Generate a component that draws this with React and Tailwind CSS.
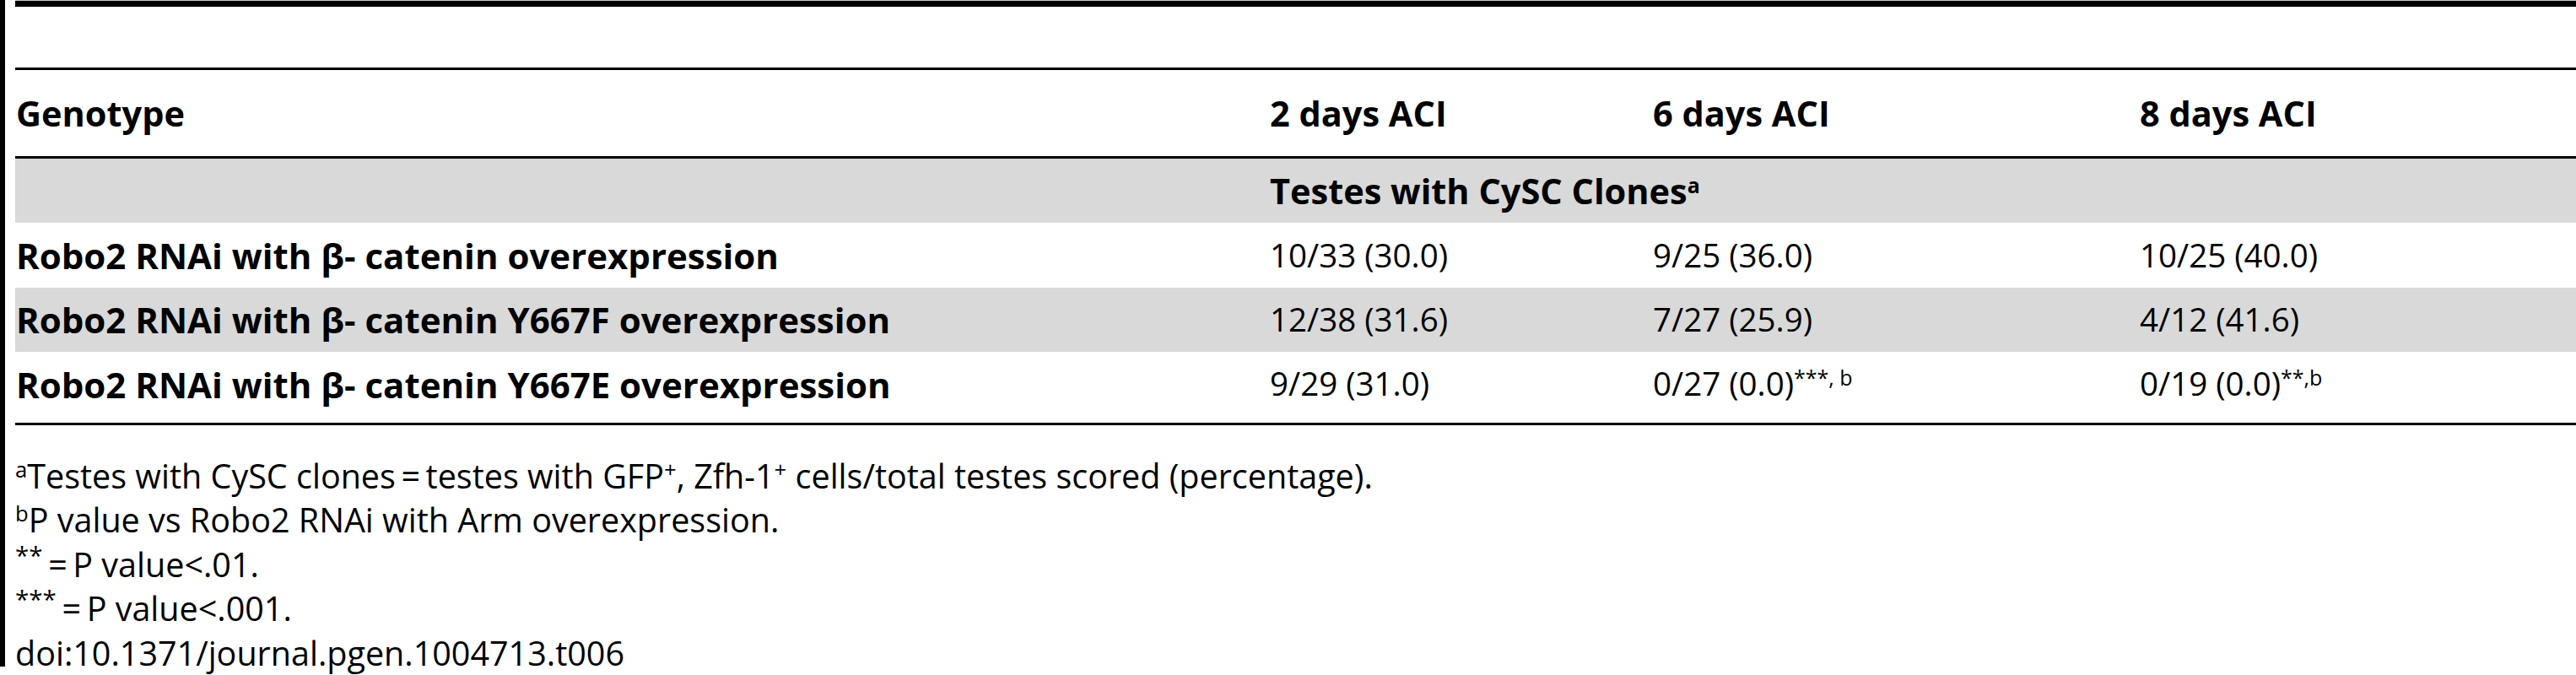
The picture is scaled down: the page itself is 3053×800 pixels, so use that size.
import React from "react";

const rows = [
  {
    genotype: "Robo2 RNAi with β- catenin overexpression",
    cells: ["10/33 (30.0)", "9/25 (36.0)", "10/25 (40.0)"],
    shade: false,
  },
  {
    genotype: "Robo2 RNAi with β- catenin Y667F overexpression",
    cells: ["12/38 (31.6)", "7/27 (25.9)", "4/12 (41.6)"],
    shade: true,
  },
  {
    genotype: "Robo2 RNAi with β- catenin Y667E overexpression",
    cells: [
      "9/29 (31.0)",
      <>0/27 (0.0)<sup className="text-[0.65em]">***, b</sup></>,
      <>0/19 (0.0)<sup className="text-[0.65em]">**,b</sup></>,
    ],
    shade: false,
  },
];

const grid = "grid grid-cols-[1487px_454px_577px_1fr] items-center";

export default function App() {
  return (
    <div
      className="flex bg-white text-black w-[3053px] h-[800px] overflow-hidden"
      style={{ fontFamily: '"Open Sans", "Noto Sans", sans-serif' }}
    >
      {/* left rule */}
      <div className="w-[6px] h-[790px] bg-black shrink-0" />

      <div className="flex-1 ml-[12px] flex flex-col text-[38.5px]">
        <div className="h-px bg-[#c8c8c8]" />
        <div className="h-[7px] bg-black" />
        <div className="h-[73px]" />
        <div className="h-[3px] bg-black" />

        {/* header */}
        <div className={`${grid} h-[102px] font-bold text-[41.5px]`}>
          <div className="pl-px">Genotype</div>
          <div>2 days ACI</div>
          <div>6 days ACI</div>
          <div>8 days ACI</div>
        </div>
        <div className="h-[3px] bg-black" />

        <div className={`${grid} h-[77px] bg-[#d9d9d9] font-bold text-[41.5px]`}>
          <div />
          <div className="col-span-3">
            Testes with CySC Clones<sup className="text-[0.6em]">a</sup>
          </div>
        </div>

        {rows.map((r, i) => (
          <div key={i} className={`${grid} h-[77px] ${r.shade ? "bg-[#d9d9d9]" : ""}`}>
            <div className="pl-px font-bold text-[42px]">{r.genotype}</div>
            {r.cells.map((c, j) => (
              <div key={j}>{c}</div>
            ))}
          </div>
        ))}

        <div className="h-[7px]" />
        <div className="h-[3px] bg-black" />

        {/* footnotes */}
        <div className="mt-[34px] leading-[52.5px] text-[39.5px]">
          <div>
            <sup className="text-[0.65em]">a</sup>Testes with CySC clones{"\u2009=\u2009"}testes with GFP
            <sup className="text-[0.65em]">+</sup>, Zfh-1<sup className="text-[0.65em]">+</sup> cells/total testes
            scored (percentage).
          </div>
          <div>
            <sup className="text-[0.65em]">b</sup>P value vs Robo2 RNAi with Arm overexpression.
          </div>
          <div>
            <sup className="text-[0.75em]">**</sup>{"\u2009=\u2009"}P value&lt;.01.
          </div>
          <div>
            <sup className="text-[0.75em]">***</sup>{"\u2009=\u2009"}P value&lt;.001.
          </div>
          <div>doi:10.1371/journal.pgen.1004713.t006</div>
        </div>
      </div>
    </div>
  );
}
